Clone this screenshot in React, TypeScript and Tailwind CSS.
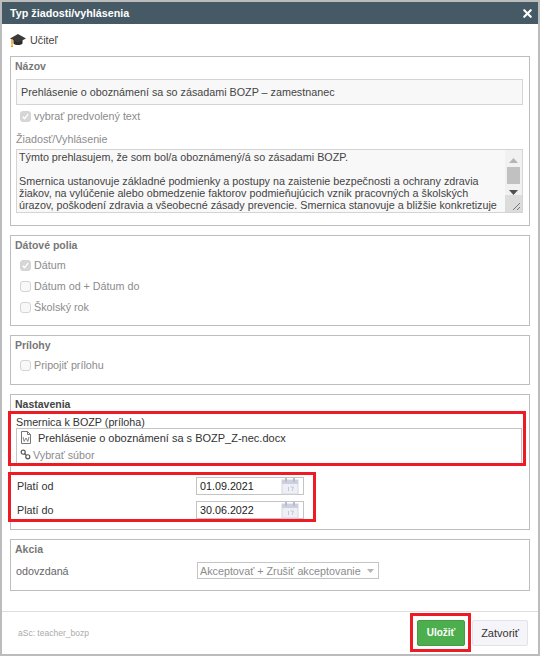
import { X } from 'lucide-react'

function Check({ label, on, rowClass }: { label: string; on?: boolean; rowClass: string }) {
  return (
    <div className={`flex items-center gap-[3px] pl-[5px] text-[#8c8c8c] ${rowClass}`}>
      <span className={`flex h-[11px] w-[11px] items-center justify-center rounded-[3px] border border-[#d4d4d4] ${on ? 'bg-[#d6d6d6]' : 'bg-[#f8f8f8]'}`}>
        {on && (
          <svg viewBox="0 0 10 10" className="h-[9px] w-[9px]">
            <path d="M2 5.2l2 2.2 4-5" fill="none" stroke="#fff" strokeWidth="1.5" />
          </svg>
        )}
      </span>
      <span>{label}</span>
    </div>
  )
}

function Section({ title, dark, className, children }: { title: string; dark?: boolean; className: string; children: React.ReactNode }) {
  return (
    <section className={`border border-[#bdbdbd] px-[4px] ${className}`}>
      <div className={`pt-[2px] text-[10.5px] leading-[14px] font-bold ${dark ? 'text-[#444]' : 'text-[#777]'}`}>{title}</div>
      {children}
    </section>
  )
}

function CalendarIcon() {
  return (
    <svg viewBox="0 0 18 18" className="h-[18px] w-[18px]">
      <rect x="1" y="3" width="16" height="14" fill="#eef0f6" stroke="#d3d6e2" />
      <rect x="1" y="3" width="16" height="4" fill="#ccd0de" />
      <rect x="4" y="1" width="2" height="4" fill="#b8bccd" />
      <rect x="12" y="1" width="2" height="4" fill="#b8bccd" />
      <rect x="7" y="10" width="1" height="4" fill="#c4c8d6" />
      <path d="M9.5 10h3l-1.5 4" fill="none" stroke="#c4c8d6" />
    </svg>
  )
}

function DateRow({ label, value }: { label: string; value: string }) {
  return (
    <div className="flex h-[24px] items-center pl-[6px] text-[#333]">
      <span className="w-[179px]">{label}</span>
      <div className="flex h-[18px] w-[108px] items-center justify-between border border-[#c4c4c4] pr-[4px] pl-[3px] text-[#222]">
        <span>{value}</span>
        <CalendarIcon />
      </div>
    </div>
  )
}

const BOX = 'absolute border-[3px] border-[#ed1c24]'

export default function App() {
  return (
    <div className="relative flex h-[656px] w-[540px] flex-col overflow-hidden border-2 border-[#bcbcbc] bg-white font-['Liberation_Sans',Arial,sans-serif] text-[10.75px] leading-[14px]">
      <header className="flex h-[22px] shrink-0 items-center justify-between bg-[#455a64] pr-[4px] pl-[8px] text-[10.75px] font-bold text-white">
        <span>Typ žiadosti/vyhlásenia</span>
        <X className="h-[13px] w-[13px]" strokeWidth={4} />
      </header>

      <div className="flex h-[32px] items-center gap-[4px] pl-[8px] text-[#444]">
        <svg viewBox="0 0 16 14" className="h-[14px] w-[16px]">
          <path d="M3.500 6v4.500c2 2 7 2 9 0V6z" fill="#2b2b2b" />
          <path d="M0 5.500L8 1l8 4.500L8 9.500z" fill="#3a3a3a" />
          <path d="M2 6v5" stroke="#f0a020" strokeWidth="1.500" />
          <path d="M0.800 14l1.200-4 1.200 4z" fill="#f0a020" />
        </svg>
        <span>Učiteľ</span>
      </div>

      <main className="flex flex-col gap-[9px] px-[8px]">
        <Section title="Názov" className="h-[170px]">
          <div className="mt-[6px] ml-[1px] flex h-[26px] w-[507px] items-center border border-[#d4d4d4] bg-[#f8f8f8] pl-[4px] text-[#444]">
            Prehlásenie o oboznámení sa so zásadami BOZP – zamestnanec
          </div>
          <Check label="vybrať predvolený text" on rowClass="mt-[4px] h-[14px]" />
          <div className="mt-[9px] ml-[1px] text-[#8c8c8c]">Žiadosť/Vyhlásenie</div>
          <div className="mt-[3px] ml-[1px] flex h-[64px] w-[507px] border border-[#d4d4d4] bg-[#f8f8f8] text-[#444]">
            <div className="flex-1 overflow-hidden pl-[2px] leading-[12px]">
              <p className="mt-[1px]">Týmto prehlasujem, že som bol/a oboznámený/á so zásadami BOZP.</p>
              <p className="mt-[12px] whitespace-nowrap">
                Smernica ustanovuje základné podmienky a postupy na zaistenie bezpečnosti a ochrany zdravia
                <br />
                žiakov, na vylúčenie alebo obmedzenie faktorov podmieňujúcich vznik pracovných a školských
                <br />
                úrazov, poškodení zdravia a všeobecné zásady prevencie. Smernica stanovuje a bližšie konkretizuje
              </p>
            </div>
            <div className="flex w-[17px] flex-col items-center bg-[#f1f1f1]">
              <svg viewBox="0 0 9 5" className="mt-[8px] h-[5px] w-[9px]"><path d="M4.5 0L9 5H0z" fill="#b5b5b5" /></svg>
              <div className="mt-[4px] h-[17px] w-[13px] bg-[#c1c1c1]" />
              <svg viewBox="0 0 9 5" className="mt-[6px] h-[5px] w-[9px]"><path d="M0 0h9L4.5 5z" fill="#505050" /></svg>
              <div className="mt-auto flex h-[17px] w-full items-end justify-end bg-[#dcdcdc] p-[1px]">
                <svg viewBox="0 0 10 10" className="h-[10px] w-[10px]"><path d="M9 2L2 9M9 6L6 9" stroke="#777" /></svg>
              </div>
            </div>
          </div>
        </Section>

        <Section title="Dátové polia" className="h-[91px]">
          <Check label="Dátum" on rowClass="mt-[6px] h-[14px]" />
          <Check label="Dátum od + Dátum do" rowClass="mt-[7px] h-[14px]" />
          <Check label="Školský rok" rowClass="mt-[7px] h-[14px]" />
        </Section>

        <Section title="Prílohy" className="h-[50px]">
          <Check label="Pripojiť prílohu" rowClass="mt-[6px] h-[14px]" />
        </Section>

        <Section title="Nastavenia" dark className="h-[136px]">
          <div className="mt-[5px] pl-[1px] leading-[12px] text-[#333]">Smernica k BOZP (príloha)</div>
          <div className="ml-[1px] h-[36px] w-[506px] border border-[#c4c4c4]">
            <div className="flex h-[17px] items-center gap-[6px] pl-[3px] text-[11px] text-[#333]">
              <svg viewBox="0 0 12 13" className="h-[13px] w-[12px]">
                <path d="M1.5.5h6l3 3v9h-9z" fill="#fff" stroke="#777" />
                <path d="M7.5.5v3h3" fill="none" stroke="#777" />
                <path d="M3 6l1.2 4.5L6 7l1.800 3.500L9 6" fill="none" stroke="#888" />
              </svg>
              <span>Prehlásenie o oboznámení sa s BOZP_Z-nec.docx</span>
            </div>
            <div className="flex h-[17px] items-center gap-[2px] pl-[3px] text-[#8c8c8c]">
              <svg viewBox="0 0 12 12" className="h-[11px] w-[11px]">
                <circle cx="3.500" cy="3.500" r="2.200" fill="none" stroke="#555" strokeWidth="1.300" />
                <circle cx="8.500" cy="8.500" r="2.200" fill="none" stroke="#555" strokeWidth="1.300" />
                <path d="M5 5l2 2" stroke="#555" strokeWidth="1.300" />
              </svg>
              <span>Vybrať súbor</span>
            </div>
          </div>
          <div className="mt-[10px] -ml-[4px] flex flex-col">
            <DateRow label="Platí od" value="01.09.2021" />
            <DateRow label="Platí do" value="30.06.2022" />
          </div>
        </Section>

        <Section title="Akcia" className="h-[52px]">
          <div className="mt-[6px] flex h-[17px] items-center pl-[1px] text-[#666]">
            <span className="w-[181px]">odovzdaná</span>
            <div className="flex h-[17px] w-[182px] items-center justify-between border border-[#c4c4c4] pr-[4px] pl-[2px] whitespace-nowrap text-[#8c8c8c]">
              <span>Akceptovať + Zrušiť akceptovanie</span>
              <svg viewBox="0 0 7 4" className="h-[4px] w-[7px]"><path d="M0 0h7L3.500 4z" fill="#b5b5b5" /></svg>
            </div>
          </div>
        </Section>
      </main>

      <footer className="mt-[20px] flex flex-1 items-center justify-between border-t border-[#dedede] pr-[10px] pl-[16px]">
        <span className="text-[8.500px] text-[#aaa]">aSc: teacher_bozp</span>
        <div className="flex items-center gap-[7px]">
          <button className="h-[26px] w-[48px] rounded-[2px] border border-[#449d44] bg-[#4cae4c] text-[10px] font-bold text-white">Uložiť</button>
          <button className="h-[26px] w-[56px] rounded-[2px] border border-[#e2e2e8] bg-[#f5f5f9] text-[11px] text-[#333]">Zatvoriť</button>
        </div>
      </footer>

      <div className={`${BOX} top-[409px] left-[6px] h-[55px] w-[518px]`} />
      <div className={`${BOX} top-[470px] left-[6px] h-[50px] w-[308px]`} />
      <div className={`${BOX} top-[611px] left-[408px] h-[39px] w-[61px]`} />
    </div>
  )
}
